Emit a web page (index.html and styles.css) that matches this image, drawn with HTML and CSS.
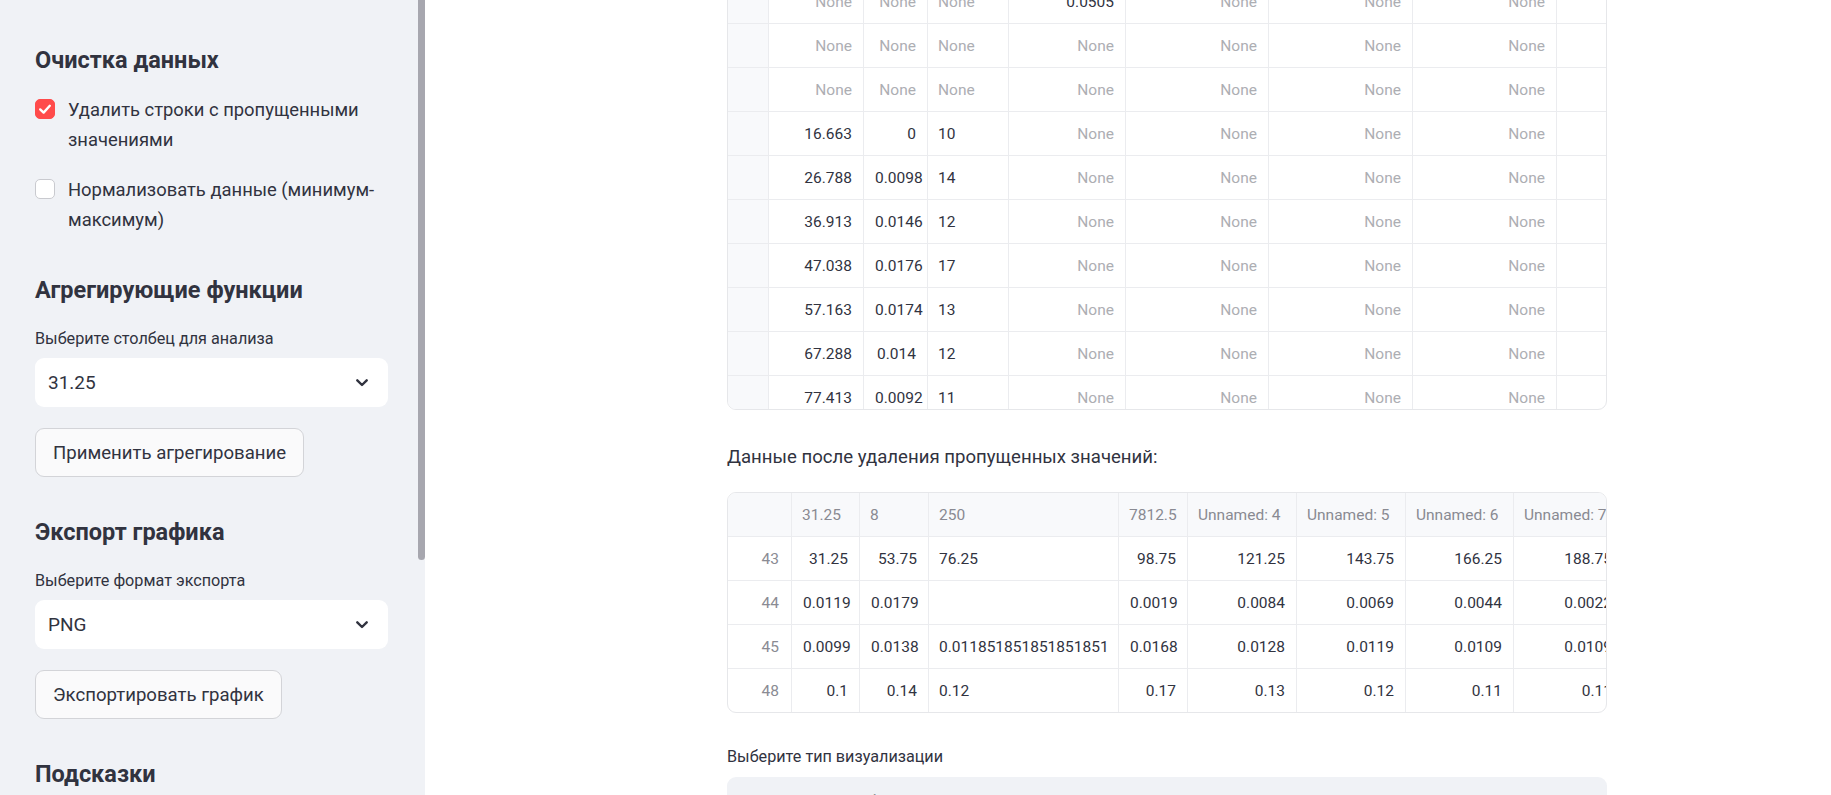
FILE: index.html
```html
<!DOCTYPE html>
<html lang="ru">
<head>
<meta charset="utf-8">
<title>Анализ данных</title>
<link rel="stylesheet" href="styles.css">
</head>
<body>
<div class="app">
  <aside class="sidebar">
    <div class="sb-content">
      <h3 class="sb-h sb-h-first">Очистка данных</h3>
      <label class="cb cb-first">
        <span class="cb-box cb-on">
          <svg viewBox="0 0 20 20" width="20" height="20"><path d="M5.2 10.4 L8.6 13.6 L14.8 6.8" fill="none" stroke="#fff" stroke-width="2.4" stroke-linecap="round" stroke-linejoin="round"/></svg>
        </span>
        <span class="cb-text">Удалить строки с пропущенными значениями</span>
      </label>
      <label class="cb cb-second">
        <span class="cb-box"></span>
        <span class="cb-text">Нормализовать данные (минимум-<br>максимум)</span>
      </label>

      <h3 class="sb-h sb-h-mid">Агрегирующие функции</h3>
      <div class="field-label">Выберите столбец для анализа</div>
      <div class="select">
        <span>31.25</span>
        <svg class="chev" viewBox="0 0 12 8" width="12" height="8"><path d="M1.3 1.3 L6 6 L10.7 1.3" fill="none" stroke="#31333f" stroke-width="2.4" stroke-linecap="round" stroke-linejoin="round"/></svg>
      </div>
      <button class="btn">Применить агрегирование</button>

      <h3 class="sb-h sb-h-mid">Экспорт графика</h3>
      <div class="field-label">Выберите формат экспорта</div>
      <div class="select">
        <span>PNG</span>
        <svg class="chev" viewBox="0 0 12 8" width="12" height="8"><path d="M1.3 1.3 L6 6 L10.7 1.3" fill="none" stroke="#31333f" stroke-width="2.4" stroke-linecap="round" stroke-linejoin="round"/></svg>
      </div>
      <button class="btn">Экспортировать график</button>

      <h3 class="sb-h sb-h-mid">Подсказки</h3>
    </div>
    <div class="sb-thumb"></div>
  </aside>

  <main class="main">
    <div class="content">
      <div class="grid grid-one">
        <table class="t-one">
          <colgroup>
            <col class="w41"><col class="w95"><col class="w64"><col class="w81"><col class="w117"><col class="w143"><col class="w144"><col class="w144"><col class="w144">
          </colgroup>
          <tbody>
            <tr><td class="ix"></td><td class="r nv">None</td><td class="r nv">None</td><td class="l nv">None</td><td class="r">0.0505</td><td class="r nv">None</td><td class="r nv">None</td><td class="r nv">None</td><td></td></tr>
            <tr><td class="ix"></td><td class="r nv">None</td><td class="r nv">None</td><td class="l nv">None</td><td class="r nv">None</td><td class="r nv">None</td><td class="r nv">None</td><td class="r nv">None</td><td></td></tr>
            <tr><td class="ix"></td><td class="r nv">None</td><td class="r nv">None</td><td class="l nv">None</td><td class="r nv">None</td><td class="r nv">None</td><td class="r nv">None</td><td class="r nv">None</td><td></td></tr>
            <tr><td class="ix"></td><td class="r">16.663</td><td class="r">0</td><td class="l">10</td><td class="r nv">None</td><td class="r nv">None</td><td class="r nv">None</td><td class="r nv">None</td><td></td></tr>
            <tr><td class="ix"></td><td class="r">26.788</td><td class="r">0.0098</td><td class="l">14</td><td class="r nv">None</td><td class="r nv">None</td><td class="r nv">None</td><td class="r nv">None</td><td></td></tr>
            <tr><td class="ix"></td><td class="r">36.913</td><td class="r">0.0146</td><td class="l">12</td><td class="r nv">None</td><td class="r nv">None</td><td class="r nv">None</td><td class="r nv">None</td><td></td></tr>
            <tr><td class="ix"></td><td class="r">47.038</td><td class="r">0.0176</td><td class="l">17</td><td class="r nv">None</td><td class="r nv">None</td><td class="r nv">None</td><td class="r nv">None</td><td></td></tr>
            <tr><td class="ix"></td><td class="r">57.163</td><td class="r">0.0174</td><td class="l">13</td><td class="r nv">None</td><td class="r nv">None</td><td class="r nv">None</td><td class="r nv">None</td><td></td></tr>
            <tr><td class="ix"></td><td class="r">67.288</td><td class="r">0.014</td><td class="l">12</td><td class="r nv">None</td><td class="r nv">None</td><td class="r nv">None</td><td class="r nv">None</td><td></td></tr>
            <tr><td class="ix"></td><td class="r">77.413</td><td class="r">0.0092</td><td class="l">11</td><td class="r nv">None</td><td class="r nv">None</td><td class="r nv">None</td><td class="r nv">None</td><td></td></tr>
          </tbody>
        </table>
      </div>

      <p class="para">Данные после удаления пропущенных значений:</p>

      <div class="grid grid-two">
        <table class="t-two">
          <colgroup>
            <col class="w64"><col class="w68"><col class="w69"><col class="w190"><col class="w69"><col class="w109"><col class="w109"><col class="w108"><col class="w110">
          </colgroup>
          <thead>
            <tr><th></th><th>31.25</th><th>8</th><th>250</th><th>7812.5</th><th>Unnamed: 4</th><th>Unnamed: 5</th><th>Unnamed: 6</th><th>Unnamed: 7</th></tr>
          </thead>
          <tbody>
            <tr><td class="r idx">43</td><td class="r">31.25</td><td class="r">53.75</td><td class="l">76.25</td><td class="r">98.75</td><td class="r">121.25</td><td class="r">143.75</td><td class="r">166.25</td><td class="r">188.75</td></tr>
            <tr><td class="r idx">44</td><td class="r">0.0119</td><td class="r">0.0179</td><td class="l"></td><td class="r">0.0019</td><td class="r">0.0084</td><td class="r">0.0069</td><td class="r">0.0044</td><td class="r">0.0022</td></tr>
            <tr><td class="r idx">45</td><td class="r">0.0099</td><td class="r">0.0138</td><td class="l">0.011851851851851851</td><td class="r">0.0168</td><td class="r">0.0128</td><td class="r">0.0119</td><td class="r">0.0109</td><td class="r">0.0109</td></tr>
            <tr><td class="r idx">48</td><td class="r">0.1</td><td class="r">0.14</td><td class="l">0.12</td><td class="r">0.17</td><td class="r">0.13</td><td class="r">0.12</td><td class="r">0.11</td><td class="r">0.11</td></tr>
          </tbody>
        </table>
      </div>

      <div class="field-label viz-label">Выберите тип визуализации</div>
      <div class="viz-select"><span>Линейный график</span></div>
    </div>
  </main>
</div>
</body>
</html>
```

FILE: styles.css
```css
* { box-sizing: border-box; }

html, body {
  margin: 0;
  padding: 0;
  width: 1831px;
  height: 795px;
  overflow: hidden;
  background: #ffffff;
  font-family: Roboto, "Noto Sans", sans-serif;
  color: #31333f;
}

.app {
  display: flex;
  width: 1831px;
  height: 795px;
}

/* ---------- sidebar ---------- */
.sidebar {
  position: relative;
  flex: 0 0 425px;
  height: 795px;
  background: #f0f2f6;
  overflow: hidden;
}

.sb-content {
  padding: 44px 37px 0 35px;
  display: flex;
  flex-direction: column;
  align-items: flex-start;
}

.sb-thumb {
  position: absolute;
  top: 0;
  right: 0;
  width: 7px;
  height: 560px;
  background: #a7a7af;
  border-radius: 0 0 4px 4px;
}

.sb-h {
  margin: 0;
  font-size: 23.5px;
  line-height: 32px;
  font-weight: 700;
  color: #31333f;
}
.sb-h-mid { margin-top: 39px; }

.cb {
  display: flex;
  align-items: flex-start;
  gap: 13px;
  font-size: 18.4px;
  line-height: 30px;
}
.cb-first { margin-top: 19px; }
.cb-second { margin-top: 20px; }

.cb-box {
  flex: 0 0 20px;
  width: 20px;
  height: 20px;
  margin-top: 4px;
  border-radius: 5px;
  background: #ffffff;
  border: 1px solid #c9cacf;
  display: flex;
}
.cb-box.cb-on {
  background: #ff4b4b;
  border-color: #ff4b4b;
}
.cb-box svg { margin: -1px; }

.cb-text { width: 318px; }

.field-label {
  margin-top: 21px;
  font-size: 16.2px;
  line-height: 24px;
  color: #31333f;
}

.select {
  margin-top: 7px;
  width: 353px;
  height: 49px;
  background: #ffffff;
  border-radius: 9px;
  display: flex;
  align-items: center;
  justify-content: space-between;
  padding: 0 20px 0 13px;
  font-size: 19px;
}
.chev { display: block; }

.btn {
  margin-top: 21px;
  height: 49px;
  padding: 0 17px;
  background: #fafafb;
  border: 1px solid #d3d4d8;
  border-radius: 9px;
  font-family: inherit;
  font-size: 18.6px;
  color: #31333f;
}

/* ---------- main ---------- */
.main {
  flex: 1 1 auto;
  height: 795px;
  overflow: hidden;
  background: #ffffff;
}

.content {
  width: 880px;
  margin-left: 302px;
}

.grid {
  width: 880px;
  border: 1px solid #e6e7ea;
  border-radius: 9px;
  overflow: hidden;
  background: #ffffff;
}

.grid table {
  border-collapse: separate;
  border-spacing: 0;
  table-layout: fixed;
  font-size: 15.5px;
}
.t-one { width: 973px; }
.t-two { width: 896px; }

.w41 { width: 41px; }
.w64 { width: 64px; }
.w68 { width: 68px; }
.w69 { width: 69px; }
.w81 { width: 81px; }
.w95 { width: 95px; }
.w108 { width: 108px; }
.w109 { width: 109px; }
.w110 { width: 110px; }
.w117 { width: 117px; }
.w143 { width: 143px; }
.w144 { width: 144px; }
.w190 { width: 190px; }

.grid td, .grid th {
  height: 44px;
  padding: 0 11px;
  border-right: 1px solid #ebecef;
  border-bottom: 1px solid #ebecef;
  white-space: nowrap;
  overflow: hidden;
  color: #31333f;
  font-weight: 400;
}

.grid td.r { text-align: right; }
.grid td.l { text-align: left; padding-left: 10px; }
.grid td.nv { color: #adaeb3; }
.grid td.ix { background: #f8f9fb; }

.grid-one {
  margin-top: -21px;
  height: 431px;
}

.para {
  margin: 32px 0 0 0;
  font-size: 18.6px;
  line-height: 30px;
  color: #31333f;
}

.grid-two { margin-top: 20px; }
.grid-two th {
  background: #f8f9fb;
  color: #898a92;
  text-align: left;
  padding-left: 10px;
}
.grid-two td.idx {
  color: #8a8b93;
  padding-right: 12px;
}
.grid-two tbody tr:last-child td { border-bottom: none; height: 43px; }

.viz-label { margin-top: 32px; }

.viz-select {
  margin-top: 8px;
  width: 880px;
  height: 49px;
  background: #f0f2f6;
  border-radius: 9px;
  padding: 0 17px;
  display: flex;
  align-items: center;
  font-size: 18.6px;
}
```
